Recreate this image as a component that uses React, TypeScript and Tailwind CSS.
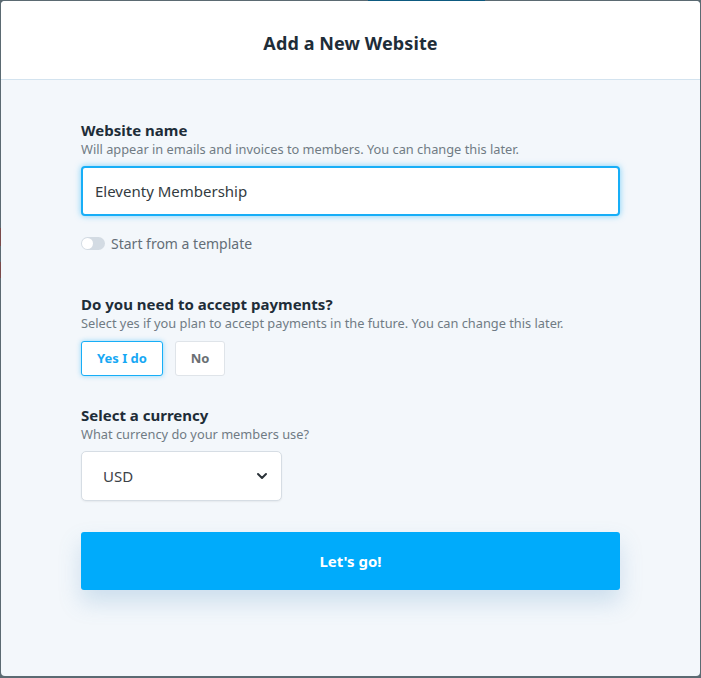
import { useState } from 'react'

const font = { fontFamily: '"Noto Sans", "Open Sans", sans-serif' }

export default function App() {
  const [name, setName] = useState('Eleventy Membership')
  const [payments, setPayments] = useState(true)

  return (
    <div className="w-[701px] h-[678px] bg-[#5b6a72] overflow-hidden relative" style={font}>
      <div className="absolute top-0 left-[368px] w-[117px] h-px bg-[#0d5a80]" />
      <div className="absolute left-0 top-[228px] w-px h-[18px] bg-[#7a4a4a]" />
      <div className="absolute left-0 top-[262px] w-px h-[16px] bg-[#7a4a4a]" />
      <div className="ml-px mt-px w-[699px] h-[675px] rounded-[4px] overflow-hidden bg-[#f3f7fb] flex flex-col">
        <div className="h-[79px] shrink-0 bg-white border-b border-[#d3e3ef] flex items-center justify-center">
          <h1 className="text-[18px] font-bold text-[#1e2d38] tracking-[0.1px] mt-[7px]">Add a New Website</h1>
        </div>

        <div className="pl-[80px] pr-[80px] pt-[40px] flex flex-col">
          <label className="text-[15px] font-bold text-[#1e2d38] leading-[20px]">Website name</label>
          <p className="text-[12.8px] text-[#707b84] leading-[18px]">
            Will appear in emails and invoices to members. You can change this later.
          </p>
          <input
            value={name}
            onChange={e => setName(e.target.value)}
            className="mt-[8px] h-[50px] w-full bg-white border-2 border-[#17aef7] rounded-[4px] px-[12px] text-[15px] text-[#333b41] outline-none shadow-[0_0_6px_rgba(23,174,247,0.55)]"
            style={font}
          />

          <div className="mt-[17px] flex items-center gap-[6px]">
            <div className="w-[24px] h-[13px] rounded-full bg-[#d3dbe3] relative">
              <div className="absolute left-[1px] top-[1px] w-[11px] h-[11px] rounded-full bg-white" />
            </div>
            <span className="text-[14px] text-[#636e77]">Start from a template</span>
          </div>

          <label className="mt-[40px] text-[15px] font-bold text-[#1e2d38] leading-[20px]">
            Do you need to accept payments?
          </label>
          <p className="text-[12.8px] text-[#707b84] leading-[18px]">
            Select yes if you plan to accept payments in the future. You can change this later.
          </p>
          <div className="mt-[9px] flex gap-[12px]">
            <button
              onClick={() => setPayments(true)}
              className={
                payments
                  ? 'h-[35px] w-[82px] bg-white rounded-[3px] border border-[#17aef7] text-[13px] font-bold text-[#17a8f4] shadow-[0_0_5px_rgba(23,174,247,0.45)]'
                  : 'h-[35px] w-[82px] bg-white rounded-[3px] border border-[#dfe4e9] text-[13px] font-bold text-[#6a6f73]'
              }
            >
              Yes I do
            </button>
            <button
              onClick={() => setPayments(false)}
              className={
                !payments
                  ? 'h-[35px] w-[50px] bg-white rounded-[3px] border border-[#17aef7] text-[13px] font-bold text-[#17a8f4] shadow-[0_0_5px_rgba(23,174,247,0.45)]'
                  : 'h-[35px] w-[50px] bg-white rounded-[3px] border border-[#dfe4e9] text-[13px] font-bold text-[#6a6f73]'
              }
            >
              No
            </button>
          </div>

          <label className="mt-[29px] text-[15px] font-bold text-[#1e2d38] leading-[20px]">Select a currency</label>
          <p className="text-[12.8px] text-[#707b84] leading-[18px]">What currency do your members use?</p>
          <div className="mt-[8px] w-[201px] h-[50px] bg-white border border-[#d6dde4] rounded-[5px] flex items-center justify-between pl-[21px] pr-[13px] shadow-[0_1px_2px_rgba(0,0,0,0.06)]">
            <span className="text-[15px] text-[#3b4247]">USD</span>
            <svg width="12" height="8" viewBox="0 0 12 8" fill="none">
              <path d="M2 2l4 4 4-4" stroke="#2a3238" strokeWidth="2" strokeLinecap="round" strokeLinejoin="round" />
            </svg>
          </div>

          <button className="mt-[31px] h-[58px] w-full bg-[#00abfb] rounded-[3px] text-white text-[15px] font-bold shadow-[0_12px_22px_rgba(90,150,200,0.25)]">
            Let's go!
          </button>
        </div>
      </div>
    </div>
  )
}
